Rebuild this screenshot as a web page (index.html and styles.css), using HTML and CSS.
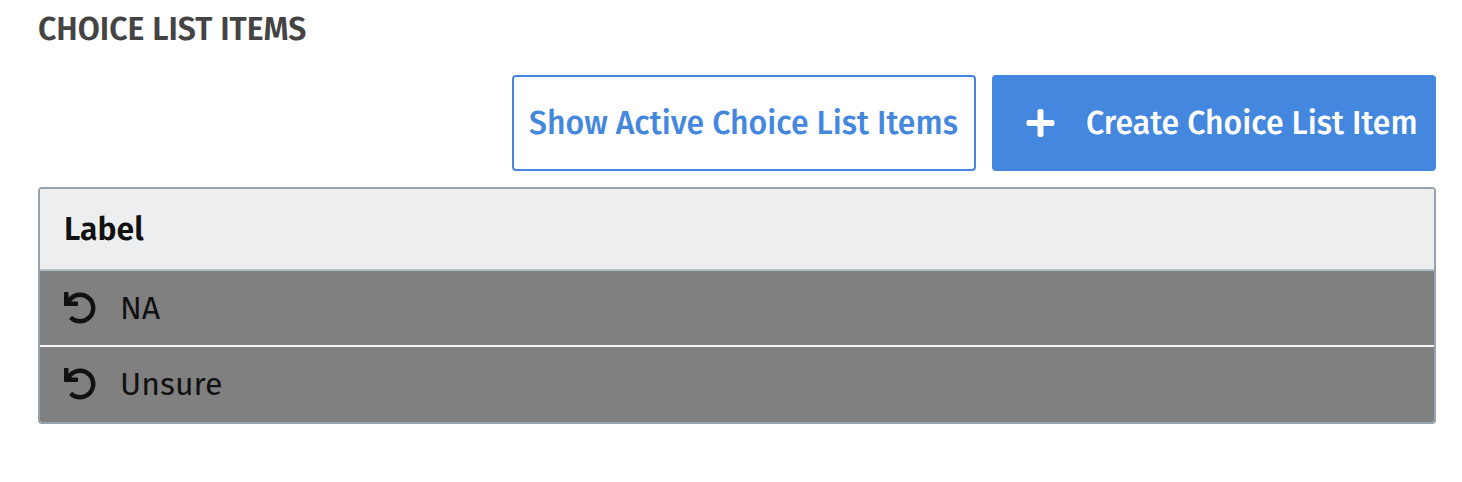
FILE: index.html
```html
<!DOCTYPE html>
<html lang="en">
<head>
    <meta charset="UTF-8">
    <meta name="viewport" content="width=device-width, initial-scale=1.0">
    <title>Choice List Items</title>
    <link rel="stylesheet" href="styles.css">
</head>
<body>
    <!-- Shared icons -->
    <svg class="icon-defs" aria-hidden="true">
        <symbol id="icon-undo" viewBox="0 0 512 512">
            <path d="M212.333 224.333H12c-6.627 0-12-5.373-12-12V12C0 5.373 5.373 0 12 0h48c6.627 0 12 5.373 12 12v78.112C117.773 39.279 184.26 7.47 258.175 8.007c136.906.994 246.448 111.623 246.157 248.532C504.041 393.258 393.12 504 256.333 504c-64.089 0-122.496-24.313-166.51-64.215-5.099-4.622-5.334-12.554-.467-17.42l33.967-33.967c4.474-4.474 11.662-4.717 16.401-.525C170.76 415.336 211.58 432 256.333 432c97.268 0 176-78.716 176-176 0-97.267-78.716-176-176-176-58.496 0-110.28 28.476-142.274 72.333h98.274c6.627 0 12 5.373 12 12v48c0 6.627-5.373 12-12 12z"/>
        </symbol>
        <symbol id="icon-plus" viewBox="0 0 448 512">
            <path d="M416 208H272V64c0-17.67-14.33-32-32-32h-32c-17.67 0-32 14.33-32 32v144H32c-17.67 0-32 14.33-32 32v32c0 17.67 14.33 32 32 32h144v144c0 17.67 14.33 32 32 32h32c17.67 0 32-14.33 32-32V304h144c17.67 0 32-14.33 32-32v-32c0-17.67-14.33-32-32-32z"/>
        </symbol>
    </svg>

    <main class="container">
        <h2 class="section-title">Choice List Items</h2>

        <div class="actions">
            <button class="btn btn-outline" type="button">Show Active Choice List Items</button>
            <button class="btn btn-primary" type="button">
                <svg class="icon-plus"><use href="#icon-plus"/></svg>
                <span>Create Choice List Item</span>
            </button>
        </div>

        <div class="table">
            <div class="table-header">Label</div>
            <div class="table-row">
                <svg class="icon-undo"><use href="#icon-undo"/></svg>
                <span>NA</span>
            </div>
            <div class="table-row">
                <svg class="icon-undo"><use href="#icon-undo"/></svg>
                <span>Unsure</span>
            </div>
        </div>
    </main>
</body>
</html>
```
FILE: styles.css
```css
* {
    margin: 0;
    padding: 0;
    box-sizing: border-box;
}

body {
    background: #fff;
    color: #111;
    font-family: "Fira Sans", "Noto Sans", sans-serif;
    font-size: 32px;
    line-height: 40px;
    white-space: nowrap;
}

.icon-defs {
    display: none;
}

.container {
    padding: 9px 26px 0 38px;
}

.section-title {
    font-size: 32px;
    font-weight: 600;
    color: #444;
    text-transform: uppercase;
    margin-bottom: 26px;
}

/* Buttons */
.actions {
    display: flex;
    justify-content: flex-end;
    gap: 16px;
    margin-bottom: 16px;
}

.btn {
    display: flex;
    align-items: center;
    height: 96px;
    border: 2px solid #4387de;
    border-radius: 4px;
    font: inherit;
    font-weight: 500;
    cursor: pointer;
}

.btn-outline {
    width: 464px;
    padding: 0 15px;
    background: #fff;
    color: #4387de;
}

.btn-primary {
    width: 444px;
    padding: 0 16px 0 32px;
    background: #4387de;
    color: #fff;
}

.icon-plus {
    width: 29px;
    height: 32px;
    margin-right: 31px;
    fill: currentColor;
}

/* Table */
.table {
    border: 2px solid #94a3ae;
    border-radius: 4px;
    overflow: hidden;
}

.table-header {
    height: 82px;
    padding: 20px 24px;
    background: #edeef0;
    border-bottom: 2px solid #b0bec5;
    font-weight: 600;
}

.table-row {
    display: flex;
    align-items: center;
    height: 74px;
    padding: 0 24px;
    background: #808080;
}

.table-row + .table-row {
    height: 77px;
    padding-bottom: 1px;
    border-top: 2px solid #f8f4f8;
}

.icon-undo {
    width: 32px;
    height: 32px;
    margin-right: 24px;
    fill: currentColor;
}
```
